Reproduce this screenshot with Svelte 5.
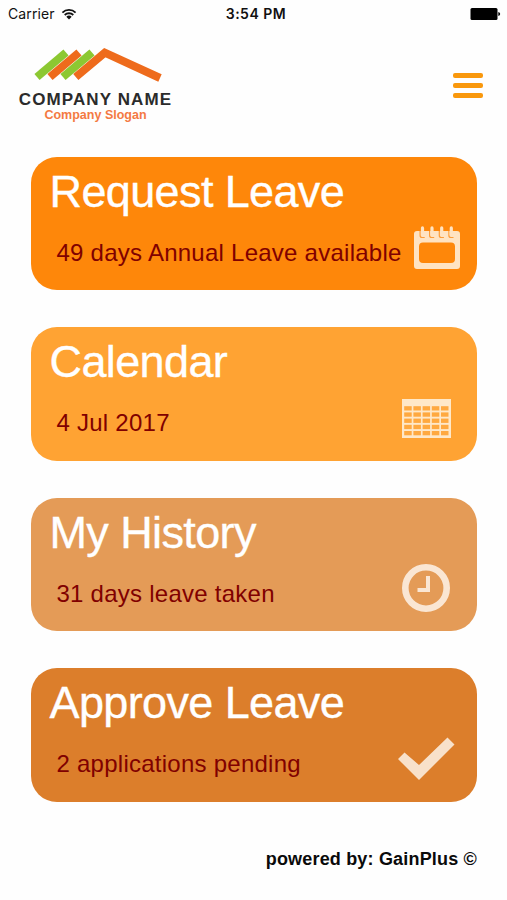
<script>
	const cards = [
		{ id: "request", title: "Request Leave", info: "49 days Annual Leave available" },
		{ id: "calendar", title: "Calendar", info: "4 Jul 2017" },
		{ id: "history", title: "My History", info: "31 days leave taken" },
		{ id: "approve", title: "Approve Leave", info: "2 applications pending" }
	];

	// cells of the calendar table icon
	const rows = [0, 1, 2, 3, 4];
	const cols = [0, 1, 2, 3, 4];
</script>

<div class="screen">
	<div class="statusbar">
		<div class="carrier">
			<span>Carrier</span>
			<svg width="16" height="12" viewBox="0 0 16 12">
				<path d="M1.4 4.6a9.5 9.5 0 0 1 13.2 0M3.7 7a6.2 6.2 0 0 1 8.6 0" fill="none" stroke="#111" stroke-width="1.8"/>
				<path d="M5.3 8.7a3.9 3.9 0 0 1 5.4 0L8 11.4z" fill="#111"/>
			</svg>
		</div>
		<span class="time">3:54 PM</span>
		<svg class="battery" width="31" height="12" viewBox="0 0 31 12">
			<rect x="0.5" y="0" width="27" height="12" rx="1.5"/>
			<path d="M28.3 4q1.9.4 1.9 2t-1.9 2z"/>
		</svg>
	</div>

	<header>
		<div class="logo">
			<svg width="160" height="38" viewBox="0 0 160 38">
				<g fill="none" stroke-width="8">
					<path d="M24 32L53 7.5" stroke="#8cc832"/>
					<path d="M37 32L66 7.5" stroke="#ee6b1c"/>
					<path d="M50 32L79 7.5" stroke="#8cc832"/>
					<path d="M62.8 32L91.8 7.6L147 33" stroke="#ee6b1c"/>
				</g>
			</svg>
			<div class="company">COMPANY NAME</div>
			<div class="slogan">Company Slogan</div>
		</div>
		<div class="menu">
			<span></span>
			<span></span>
			<span></span>
		</div>
	</header>

	<main>
		{#each cards as card}
			<section class="card {card.id}">
				<h1>{card.title}</h1>
				<p>{card.info}</p>
				{#if card.id == "request"}
					<svg class="icon" width="48" height="46" viewBox="0 0 48 46">
						<path fill-rule="evenodd" d="M4 6H44Q47 6 47 9V41Q47 44 44 44H4Q1 44 1 41V9Q1 6 4 6ZM10 17.5Q6 17.5 6 21.5V34Q6 38 10 38H38Q42 38 42 34V21.5Q42 17.5 38 17.5Z"/>
						{#each [9.5, 19, 28.7, 38.3] as x}
							<path class="ring-gap" d="M{x - 2.4} 6V10.5q0 2 2 2h2.6" />
							<path class="ring" d="M{x} 2.9V9.5" />
						{/each}
					</svg>
				{:else if card.id == "calendar"}
					<svg class="icon" width="49" height="39" viewBox="0 0 49 39">
						<rect class="sheet" width="49" height="39"/>
						{#each rows as r}
							{#each cols as c}
								<rect class="cell" x={2.2 + c * 9.2} y={7.2 + r * 6.2} width="7.5" height="4.3"/>
							{/each}
						{/each}
					</svg>
				{:else if card.id == "history"}
					<svg class="icon" width="48" height="48" viewBox="0 0 48 48">
						<circle cx="24" cy="24" r="20.7" fill="none" stroke-width="6.6"/>
						<path d="M26 12V26H15.5" fill="none" stroke-width="4"/>
					</svg>
				{:else}
					<svg class="icon" width="58" height="44" viewBox="0 0 58 44">
						<path d="M1 22L7.5 15.5L22 28L50.5 0.5L57.5 7.5L22 43Z"/>
					</svg>
				{/if}
			</section>
		{/each}
	</main>

	<footer>powered by: GainPlus ©</footer>
</div>

<style>
	:global(body) {
		background: #fff;
	}

	.screen {
		width: 507px;
		height: 900px;
		overflow: hidden;
		font-family: "Liberation Sans", Arial, sans-serif;
		background: #fefefe;
	}

	.statusbar {
		display: grid;
		grid-template-columns: 1fr auto 1fr;
		align-items: center;
		height: 27px;
		padding: 0 6px 0 8px;
		color: #111;
		font-family: Inter, Roboto, sans-serif;
		font-size: 14px;
	}
	.carrier {
		display: flex;
		align-items: center;
		gap: 6px;
		letter-spacing: 0.1px;
	}
	.time {
		margin-left: 3px;
		font-weight: 600;
		font-size: 14px;
		letter-spacing: 0.5px;
	}
	.battery {
		justify-self: end;
	}

	header {
		display: flex;
		justify-content: space-between;
		height: 129.5px;
		padding: 0 24px 0 13px;
		box-sizing: border-box;
	}
	.logo {
		width: 165px;
		padding-top: 18px;
		text-align: center;
		font-weight: bold;
	}
	.logo svg {
		display: block;
	}
	.company {
		margin-top: 7px;
		font-size: 17px;
		line-height: 20px;
		letter-spacing: 1.1px;
		color: #2b2b2b;
		white-space: nowrap;
	}
	.slogan {
		margin-top: -2px;
		font-size: 12.5px;
		line-height: 14px;
		color: #f47a43;
	}
	.menu {
		display: flex;
		flex-direction: column;
		gap: 5px;
		padding-top: 46px;
	}
	.menu span {
		width: 30px;
		height: 5px;
		border-radius: 2px;
		background: #f9980d;
	}

	main {
		display: flex;
		flex-direction: column;
		gap: 37px;
		padding: 0 30.5px;
	}
	.card {
		position: relative;
		height: 133.5px;
		padding: 9px 0 0 19px;
		box-sizing: border-box;
		border-radius: 26px;
		white-space: nowrap;
	}
	.card h1 {
		margin: 0;
		font-size: 45px;
		line-height: 52px;
		font-weight: normal;
		letter-spacing: -0.62px;
		color: #fff;
		-webkit-text-stroke: 0.35px #fff;
	}
	.card p {
		margin: 21px 0 0 7px;
		font-size: 24px;
		line-height: 28px;
		letter-spacing: 0.25px;
		color: #800000;
	}
	.request {
		background: #fe870a;
	}
	.calendar {
		background: #ffa333;
	}
	.history {
		background: #e49b57;
	}
	.approve {
		background: #dc7e2b;
	}

	.icon {
		position: absolute;
		fill: #ffe3c2;
	}
	.request .icon {
		right: 15.5px;
		top: 68.5px;
	}
	.ring {
		stroke: #ffe3c2;
		stroke-width: 3.2;
		stroke-linecap: round;
	}
	.ring-gap {
		fill: none;
		stroke: #fe9d38;
		stroke-width: 1.2;
	}
	.calendar .icon {
		right: 25.5px;
		top: 72px;
	}
	.sheet {
		fill: #ffe8c8;
	}
	.cell {
		fill: #ffa940;
	}
	.history .icon {
		right: 26.5px;
		top: 66.5px;
		stroke: #fae6d3;
	}
	.approve .icon {
		right: 21.5px;
		top: 69px;
		fill: #f8e1ca;
	}

	footer {
		margin-top: 46px;
		padding-right: 30px;
		text-align: right;
		font-size: 18px;
		line-height: 22px;
		font-weight: bold;
		letter-spacing: 0.18px;
		color: #0a0a0a;
	}
</style>
